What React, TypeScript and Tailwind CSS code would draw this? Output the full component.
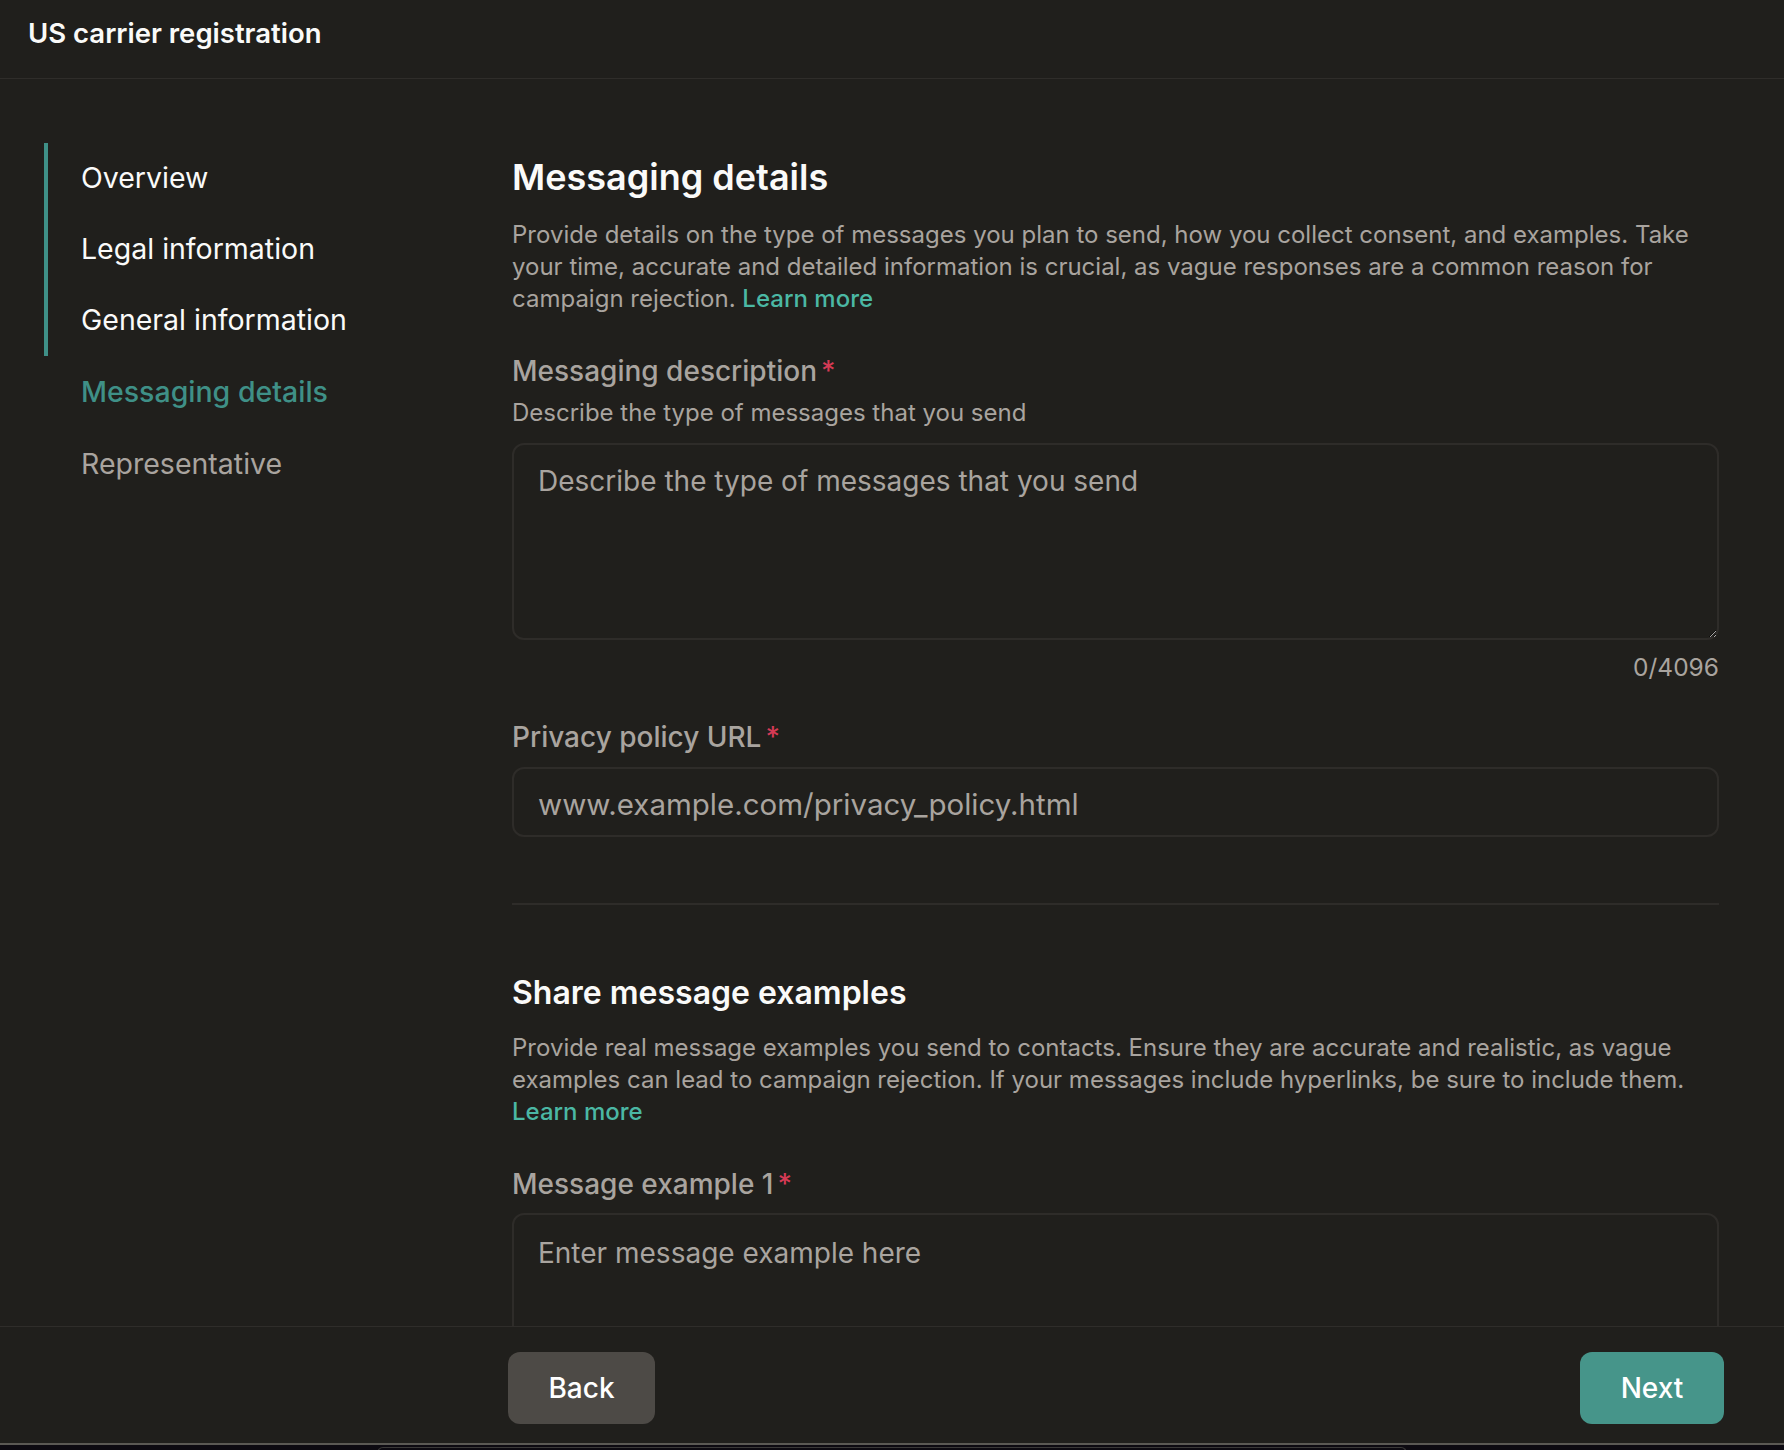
import { useState } from 'react'

const steps = [
  { label: 'Overview', state: 'done' },
  { label: 'Legal information', state: 'done' },
  { label: 'General information', state: 'done' },
  { label: 'Messaging details', state: 'current' },
  { label: 'Representative', state: 'todo' },
]

function Label({ children }: { children: React.ReactNode }) {
  return (
    <div className="text-[28px] leading-[34px] font-medium text-[#a9a49f]">
      {children}
      <span className="ml-1 text-[#d63a55]">*</span>
    </div>
  )
}

export default function App() {
  const [description, setDescription] = useState('')
  const [url, setUrl] = useState('')
  const [example, setExample] = useState('')

  return (
    <div className="w-[1784px] h-[1450px] bg-[#201f1c] flex flex-col overflow-hidden font-['Inter',sans-serif] text-[#a9a49f]">
      {/* header */}
      <div className="h-[79px] shrink-0 border-b border-[#2f2d2a] px-[28px] pt-[13px]">
        <h1 className="text-[27.5px] leading-[40px] font-semibold text-[#fafaf9]">US carrier registration</h1>
      </div>

      {/* body */}
      <div className="flex flex-1 min-h-0">
        <nav className="w-[512px] shrink-0 pl-[44px] pt-[64px]">
          <div className="border-l-4 border-[#3f9087]">
            {steps.slice(0, 3).map(s => (
              <div key={s.label} className="h-[71px] flex items-center pl-[33px] text-[28.5px] text-[#fafaf9]">
                {s.label}
              </div>
            ))}
          </div>
          <div>
            {steps.slice(3).map(s => (
              <div
                key={s.label}
                className={`h-[72px] flex items-center pl-[37px] text-[28.5px] ${
                  s.state === 'current' ? 'text-[#3f9087] font-medium' : 'text-[#a9a49f]'
                }`}
              >
                {s.label}
              </div>
            ))}
          </div>
        </nav>

        <main className="w-[1207px] shrink-0 pt-[76px] overflow-hidden">
          <h2 className="text-[36px] leading-[44px] font-semibold text-[#fafaf9]">Messaging details</h2>
          <p className="mt-[20px] text-[24px] leading-8">
            Provide details on the type of messages you plan to send, how you collect consent, and examples. Take
            <br />
            your time, accurate and detailed information is crucial, as vague responses are a common reason for
            <br />
            campaign rejection. <a className="text-[#4bb8a4] font-medium">Learn more</a>
          </p>

          <div className="mt-[39px]">
            <Label>Messaging description</Label>
            <div className="mt-[9px] text-[24px] leading-8">Describe the type of messages that you send</div>
            <textarea
              value={description}
              onChange={e => setDescription(e.target.value)}
              placeholder="Describe the type of messages that you send"
              className="mt-[14px] block w-full h-[197px] rounded-xl border-2 border-[#2e2c29] bg-transparent px-[24px] pt-[18px] pb-[16px] text-[28px] leading-9 text-[#fafaf9] placeholder:text-[#a9a49f] outline-none"
            />
            <div className="text-right text-[24.5px] leading-8 mt-[11px]">0/4096</div>
          </div>

          <div className="mt-[37px]">
            <Label>Privacy policy URL</Label>
            <input
              value={url}
              onChange={e => setUrl(e.target.value)}
              placeholder="www.example.com/privacy_policy.html"
              className="mt-[13px] block w-full h-[70px] rounded-xl border-2 border-[#2e2c29] bg-transparent px-[24px] pt-[3px] text-[29.5px] text-[#fafaf9] placeholder:text-[#a9a49f] outline-none"
            />
          </div>

          <div className="mt-[66px] border-t-2 border-[#2e2c29]" />

          <h2 className="mt-[68px] text-[32px] leading-[40px] font-semibold text-[#fafaf9]">Share message examples</h2>
          <p className="mt-[19px] text-[24px] leading-8">
            Provide real message examples you send to contacts. Ensure they are accurate and realistic, as vague
            <br />
            examples can lead to campaign rejection. If your messages include hyperlinks, be sure to include them.
            <br />
            <a className="text-[#4bb8a4] font-medium">Learn more</a>
          </p>

          <div className="mt-[39px]">
            <Label>Message example 1</Label>
            <textarea
              value={example}
              onChange={e => setExample(e.target.value)}
              placeholder="Enter message example here"
              className="mt-[12px] block w-full h-[197px] rounded-xl border-2 border-[#2e2c29] bg-transparent px-[24px] pt-[20px] pb-[16px] text-[28px] leading-9 text-[#fafaf9] placeholder:text-[#a9a49f] outline-none resize-none"
            />
          </div>
        </main>
      </div>

      {/* footer */}
      <div className="h-[117px] shrink-0 border-t border-[#2f2d2a] flex items-start justify-between pl-[508px] pr-[60px] pt-[25px]">
        <button className="w-[147px] h-[72px] rounded-xl bg-[#4d4a46] text-[28px] font-medium text-white">Back</button>
        <button className="w-[144px] h-[72px] rounded-xl bg-[#46958a] text-[28px] font-medium text-white">Next</button>
      </div>
      <div className="h-[7px] shrink-0 border-t-2 border-[#5b5954] bg-[#0d0a11] flex justify-center">
        <div className="w-[1030px] h-[6px] mt-[2px] rounded-t-xl border-t border-x border-[#3a3838]" />
      </div>
    </div>
  )
}
